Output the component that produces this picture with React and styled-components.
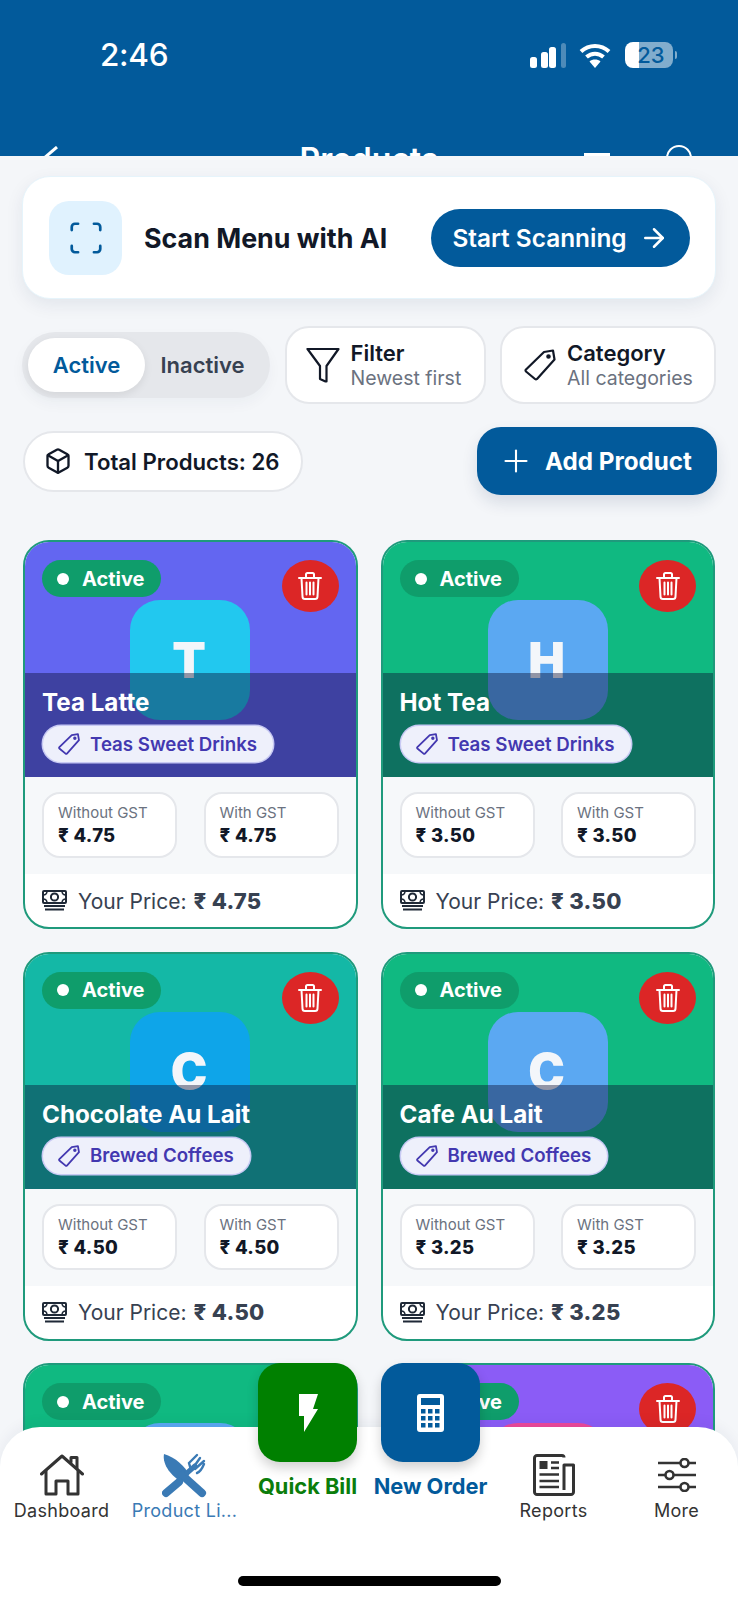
import React from "react";
import styled, { createGlobalStyle } from "styled-components";
import { Box, Plus, ArrowRight, Scan } from "lucide-react";

const Global = createGlobalStyle`
  html, body { margin: 0; padding: 0; background: #f4f6f9; }
  * { box-sizing: border-box; }
  body { font-family: Inter, "Liberation Sans", sans-serif; }
`;
const BLUE = "#025a9b";

const Page = styled.div`position: relative; width: 738px; height: 1600px; overflow: hidden; background: #f4f6f9;`;
const Header = styled.header`position: relative; height: 156px; background: ${BLUE}; overflow: hidden; color: #fff;`;
const StatusBar = styled.div`display: flex; align-items: center; height: 26px; margin-top: 42px; padding: 0 65px 0 100px; position: absolute; top: 0; left: 0; right: 0;`;
const Time = styled.span`font-size: 31.5px; font-weight: 500; letter-spacing: -0.3px; line-height: 26px;`;
const StatusIcons = styled.div`display: flex; align-items: center; margin-left: auto;`;
const Battery = styled.div`width: 48px; height: 26px; border-radius: 8px; margin-left: 14px; background: linear-gradient(90deg, #fff 0 14px, rgba(255,255,255,.5) 14px); color: ${BLUE}; font-size: 22px; font-weight: 500; display: flex; align-items: center; justify-content: center; position: relative; padding-left: 4px;
  &::after { content: ""; position: absolute; right: -4px; top: 9px; width: 2px; height: 8px; border-radius: 0 2px 2px 0; background: rgba(255,255,255,.5); }`;
const NavBarClip = styled.div`position: absolute; top: 143px; left: 0; right: 0; height: 40px;`;
const Title = styled.div`position: absolute; left: 0; right: 0; text-align: center; top: -2px; font-size: 32px; font-weight: 600; line-height: 38px;`;
const BackIcon = styled.span`position: absolute; left: 42px; top: 3px; display: block; line-height: 0;`;
const MenuBars = styled.span`position: absolute; left: 584px; top: 10px; width: 26px; height: 3px; background: #fff; display: block;`;
const SearchIcon = styled.span`position: absolute; left: 666px; top: 2px; width: 26px; height: 26px; border-radius: 50%; border: 2.5px solid #fff; display: block;`;

const Main = styled.main`padding: 20px 23px 0;`;
const ScanCard = styled.section`display: flex; align-items: center; height: 123px; padding: 0 25px 0 26px; border-radius: 28px; background: #fff; border: 1px solid #e6f4fb; box-shadow: 0 6px 18px rgba(15,40,80,.08); margin: 0 -1px 27px;`;
const ScanIcon = styled.div`width: 73px; height: 74px; border-radius: 20px; background: #e0f2fe; display: flex; align-items: center; justify-content: center; color: ${BLUE};`;
const ScanTitle = styled.h2`margin: 0 0 0 22px; font-size: 26.8px; font-weight: 700; color: #111827;`;
const ScanBtn = styled.button`margin-left: auto; width: 259px; height: 58px; border-radius: 29px; border: 0; background: ${BLUE}; color: #fff; font: 600 24.4px Inter, sans-serif; display: flex; align-items: center; justify-content: center; gap: 12px;`;

const Controls = styled.div`display: flex; align-items: center; justify-content: space-between; height: 78px; margin: 0 -1px 23px;`;
const Segmented = styled.div`width: 248px; height: 66px; border-radius: 33px; background: #e5e7eb; display: flex; align-items: center; padding: 0 6px; box-shadow: 0 6px 14px rgba(15,40,80,.04);`;
const Seg = styled.span`height: 54px; display: flex; align-items: center; justify-content: center; width: ${p => p.$on ? 117 : 115}px; border-radius: 27px; font-size: 22px; font-weight: 600; color: ${p => p.$on ? BLUE : "#374151"}; background: ${p => p.$on ? "#fff" : "transparent"}; box-shadow: ${p => p.$on ? "0 3px 8px rgba(0,0,0,.08)" : "none"};`;
const FilterBox = styled.div`width: ${p => p.$w}px; height: 78px; border-radius: 24px; background: #fff; border: 2px solid #e5e7eb; display: flex; align-items: center; gap: ${p => p.$gap}px; padding-left: ${p => p.$pad}px; color: #111827;`;
const FilterText = styled.div`display: flex; flex-direction: column;`;
const FilterName = styled.span`font-size: 22px; font-weight: 600; color: #111827; line-height: 26px;`;
const FilterSub = styled.span`font-size: 19.5px; color: #6b7280; line-height: 24px;`;

const TotalsRow = styled.div`display: flex; align-items: center; justify-content: space-between; height: 68px; margin-bottom: 45px;`;
const Total = styled.div`width: 280px; height: 61px; border-radius: 31px; background: #fff; border: 2px solid #e5e7eb; display: flex; align-items: center; gap: 12px; padding-left: 19px; font-size: 22.2px; font-weight: 600; color: #111827;`;
const AddBtn = styled.button`width: 240px; height: 68px; margin-right: -2px; border-radius: 24px; border: 0; background: ${BLUE}; color: #fff; font: 700 24.2px Inter, sans-serif; display: flex; align-items: center; gap: 11px; padding-left: 21px; box-shadow: 0 8px 16px rgba(15,40,80,.12);`;

const Grid = styled.div`display: grid; grid-template-columns: 334.5px 334.5px; gap: 22.5px 23px;`;
const Card = styled.article`height: 389px; border-radius: 26px; border: 2px solid #1f9a7c; overflow: hidden; background: #fff; display: flex; flex-direction: column;`;
const Head = styled.div`position: relative; height: 235px; background: ${p => p.$bg}; flex: none;`;
const HeadTop = styled.div`height: 131px; padding: 18px 17px 0 17px; display: flex; justify-content: space-between; align-items: flex-start;`;
const Badge = styled.span`position: relative; z-index: 2; width: 119px; height: 37px; border-radius: 19px; background: #0f9d6b; color: #fff; font-size: 20px; font-weight: 700; display: flex; align-items: center; gap: 13px; padding-left: 15px;`;
const Dot = styled.i`width: 12px; height: 12px; border-radius: 50%; background: #fff;`;
const Delete = styled.span`position: relative; z-index: 2; width: 57px; height: 52px; border-radius: 50%; background: #dc2626; color: #fff; display: flex; align-items: center; justify-content: center;`;
const Tile = styled.div`position: absolute; left: 105px; top: 58px; width: 120px; height: 120px; border-radius: 30px; background: ${p => p.$bg}; color: #f3f6fa; font-size: 49px; font-weight: 900; display: flex; align-items: center; justify-content: center; padding-right: 2px;`;
const Band = styled.div`position: relative; height: 104px; background: rgba(12,15,50,.42); padding: 12px 17px 0; color: #fff;`;
const Name = styled.div`font-size: 24.2px; font-weight: 700; line-height: 36px; position: relative;`;
const Chip = styled.span`display: inline-flex; align-items: center; gap: 10px; height: 36px; margin: 5px 0 0 1px; padding: 0 16px 0 15px; border-radius: 18px; background: #eef0fb; box-shadow: 0 0 0 1.5px #c7c9f3; color: #4338b0; font-size: 18.7px; font-weight: 600; position: relative;`;
const Prices = styled.div`height: 97px; background: #f6f8fa; padding: 15px 17px 0 17px; display: flex; justify-content: space-between; flex: none;`;
const PriceBox = styled.div`width: 135px; height: 66px; border-radius: 18px; background: #fff; border: 2px solid #e5e7eb; padding: 9px 0 0 14px;`;
const PriceLabel = styled.div`font-size: 15px; color: #6b7280; line-height: 20px;`;
const PriceVal = styled.div`font-size: 18.5px; font-weight: 800; color: #111827; line-height: 25px; letter-spacing: .3px;`;
const Foot = styled.div`flex: 1; display: flex; align-items: center; padding: 0 0 0 17px; gap: 11px; font-size: 21px; color: #374151;`;
const FootPrice = styled.b`font-size: 22px; font-weight: 800; margin-left: 7px; letter-spacing: .3px;`;

const Nav = styled.nav`position: absolute; z-index: 5; left: 0; right: 0; bottom: 0; height: 173px; background: #fff; border-radius: 40px 40px 0 0; box-shadow: 0 -4px 14px rgba(15,40,80,.05); display: grid; grid-template-columns: repeat(6, 123px);`;
const NavItem = styled.div`display: flex; flex-direction: column; align-items: center; padding-top: 25px; font-size: 18px; color: ${p => p.$on ? "#3a7ab5" : "#333"}; white-space: nowrap; letter-spacing: .3px;`;
const NavIcon = styled.div`height: 46px; display: flex; align-items: center; justify-content: center;`;
const NavLabel = styled.span`line-height: 22px; margin-top: 2px;`;
const Float = styled.div`display: flex; flex-direction: column; align-items: center; margin-top: -64px; color: ${p => p.$c}; white-space: nowrap;`;
const FloatBtn = styled.div`width: 99px; height: 99px; border-radius: 22px; background: ${p => p.$bg}; display: flex; align-items: center; justify-content: center; box-shadow: 0 6px 12px rgba(0,0,0,.18);`;
const FloatLabel = styled.span`font-size: 21.8px; font-weight: 700; line-height: 26px; margin-top: 11px;`;
const HomeBar = styled.div`position: absolute; left: 238px; top: 149px; width: 263px; height: 10px; border-radius: 5px; background: #000;`;

const Signal = () => (
  <svg width="36" height="25" viewBox="0 0 36 25" fill="#fff">
    <rect x="0" y="14" width="7" height="11" rx="2.5" /><rect x="11" y="9" width="7" height="16" rx="2.5" />
    <rect x="19" y="4" width="7" height="21" rx="2.5" /><rect x="31" y="0" width="5" height="25" rx="2.5" opacity=".3" />
  </svg>
);
const Wifi = () => (
  <svg width="32" height="25" viewBox="0 0 32 25" fill="none" stroke="#fff" strokeWidth="4" style={{ marginLeft: 13 }}>
    <path d="M2 8.5C10 1 22 1 30 8.5" /><path d="M7.5 14C12.5 9.5 19.5 9.5 24.5 14" />
    <path d="M16 25l-5.5-6.5c3-2.6 8-2.6 11 0z" fill="#fff" stroke="none" />
  </svg>
);
const Back = () => (
  <svg width="18" height="14" viewBox="0 0 18 14" fill="none" stroke="#fff" strokeWidth="3"><path d="M15 1L1 13" /></svg>
);
const FunnelIcon = () => (
  <svg width="34" height="38" viewBox="0 0 34 38" fill="none" stroke="#111827" strokeWidth="2.2" strokeLinejoin="round">
    <path d="M1.5 3h31L20.5 20v15.5h-1l-5.5-2.5V20z" />
  </svg>
);
const TagIcon = ({ size = 32, sw = 2.2, color = "#111827" }) => (
  <svg width={size} height={size} viewBox="0 0 32 32" fill="none" stroke={color} strokeWidth={sw} strokeLinejoin="round">
    <path d="M20 3l9-1.5 1.5 9L13 30a1.5 1.5 0 0 1-2 0L2 22.5a1.5 1.5 0 0 1 0-2z" />
    <circle cx="24.5" cy="7.5" r="1.2" fill={color} />
  </svg>
);
const TrashIcon = () => (
  <svg width="24" height="28" viewBox="0 0 24 28" fill="none" stroke="#fff" strokeWidth="2" strokeLinecap="round" strokeLinejoin="round">
    <path d="M1 6h22M8 6V2.5A1.5 1.5 0 0 1 9.5 1h5A1.5 1.5 0 0 1 16 2.5V6" />
    <path d="M3.5 6l1 18.5A2.5 2.5 0 0 0 7 27h10a2.5 2.5 0 0 0 2.5-2.5l1-18.5" />
    <path d="M8.5 10.5v12M12 10.5v12M15.5 10.5v12" />
  </svg>
);
const Money = () => (
  <svg width="25" height="21" viewBox="0 0 25 21" fill="none" stroke="#1f2937" strokeWidth="2">
    <rect x="1" y="1" width="23" height="12" rx="1" /><circle cx="12.5" cy="7" r="3.6" />
    <path d="M1 5c3 0 4-2 4-4M24 5c-3 0-4-2-4-4M1 9c3 0 4 2 4 4M24 9c-3 0-4 2-4 4" strokeWidth="1.5" />
    <path d="M2 16h21M3 19.5h19" />
  </svg>
);
const HomeIcon = () => (
  <svg width="44" height="42" viewBox="0 0 44 42" fill="none" stroke="#333" strokeWidth="3" strokeLinejoin="round" strokeLinecap="round">
    <path d="M1.5 20L22 2l20.5 18" /><path d="M6 17v23h10V27h12v13h10V17" /><path d="M31 8V3.5h6V14" />
  </svg>
);
const ForkKnife = () => (
  <svg width="45" height="45" viewBox="0 0 45 45" fill="#3a7ab5">
    <path d="M2 1C13 4 24 14 27 22L20 29C10 24 0 12 2 1Z" />
    <path d="M20 22L40 40" stroke="#3a7ab5" strokeWidth="8" strokeLinecap="round" />
    <path d="M4 40L17 29" stroke="#3a7ab5" strokeWidth="8" strokeLinecap="round" />
    <path d="M25 20L33 13" stroke="#3a7ab5" strokeWidth="5" strokeLinecap="round" />
    <path d="M29 17L27 10l8-8M31 15L38 5M33 16l9-8M35 20c3-1 5-4 7-9" stroke="#3a7ab5" strokeWidth="2.4" strokeLinecap="round" fill="none" />
  </svg>
);
const News = () => (
  <svg width="42" height="42" viewBox="0 0 42 42" fill="none" stroke="#333" strokeWidth="3" strokeLinejoin="round">
    <path d="M31 3.5a2 2 0 0 0-2-2H4a2.5 2.5 0 0 0-2.5 2.5v34A2.5 2.5 0 0 0 4 40.5h34a2.5 2.5 0 0 0 2.5-2.5V11H31v25" />
    <rect x="6.5" y="7" width="8" height="8" fill="#333" stroke="none" />
    <path d="M18 8.5h8M18 14h8M6.5 20.5h19.5M6.5 27h19.5M6.5 33h19.5" strokeWidth="2.6" />
  </svg>
);
const Sliders = () => (
  <svg width="38" height="34" viewBox="0 0 38 34" fill="none" stroke="#333" strokeWidth="2.6">
    <path d="M0 5h22M31 5h7M0 17h7M16 17h22M0 29h22M31 29h7" />
    <circle cx="26.5" cy="5" r="4" /><circle cx="11.5" cy="17" r="4" /><circle cx="26.5" cy="29" r="4" />
  </svg>
);
const Bolt = () => (
  <svg width="20" height="38" viewBox="0 0 20 38"><path d="M1 0h19l-5 15h5L6 38V22H1z" fill="#fff" /></svg>
);
const Calc = () => (
  <svg width="27" height="38" viewBox="0 0 27 38">
    <rect width="27" height="38" rx="3" fill="#fff" /><rect x="4" y="4" width="19" height="7" fill={BLUE} />
    {[15, 22, 29].flatMap(y => [4, 11, 18].map(x => <rect key={x + "-" + y} x={x} y={y} width="4.5" height="4.5" fill={BLUE} />))}
  </svg>
);

const products = [
  { n: "Tea Latte", c: "Teas Sweet Drinks", p: "4.75", l: "T", bg: "#6366f1", t: "#22c8ef" },
  { n: "Hot Tea", c: "Teas Sweet Drinks", p: "3.50", l: "H", bg: "#10b981", t: "#5ba8f2" },
  { n: "Chocolate Au Lait", c: "Brewed Coffees", p: "4.50", l: "C", bg: "#14b8a6", t: "#0ea5e9" },
  { n: "Cafe Au Lait", c: "Brewed Coffees", p: "3.25", l: "C", bg: "#10b981", t: "#5ba8f2" },
  { n: "Espresso", c: "Brewed Coffees", p: "3.00", l: "E", bg: "#10b981", t: "#5ba8f2" },
  { n: "Mocha", c: "Brewed Coffees", p: "4.00", l: "M", bg: "#8b5cf6", t: "#ec4899" },
];

export default function App() {
  return (
    <Page>
      <Global />
      <Header>
        <StatusBar>
          <Time>2:46</Time>
          <StatusIcons><Signal /><Wifi /><Battery>23</Battery></StatusIcons>
        </StatusBar>
        <NavBarClip>
          <BackIcon><Back /></BackIcon>
          <Title>Products</Title>
          <MenuBars />
          <SearchIcon />
        </NavBarClip>
      </Header>
      <Main>
        <ScanCard>
          <ScanIcon><Scan size={38} strokeWidth={1.7} /></ScanIcon>
          <ScanTitle>Scan Menu with AI</ScanTitle>
          <ScanBtn>Start Scanning <ArrowRight size={30} strokeWidth={2} /></ScanBtn>
        </ScanCard>
        <Controls>
          <Segmented><Seg $on>Active</Seg><Seg>Inactive</Seg></Segmented>
          <FilterBox $w={201} $gap={11} $pad={19}><FunnelIcon /><FilterText><FilterName>Filter</FilterName><FilterSub>Newest first</FilterSub></FilterText></FilterBox>
          <FilterBox $w={216} $gap={11} $pad={22}><TagIcon /><FilterText><FilterName>Category</FilterName><FilterSub>All categories</FilterSub></FilterText></FilterBox>
        </Controls>
        <TotalsRow>
          <Total><Box size={28} strokeWidth={2} />Total Products: 26</Total>
          <AddBtn><Plus size={36} strokeWidth={1.4} />Add Product</AddBtn>
        </TotalsRow>
        <Grid>
          {products.map((x, i) => (
            <Card key={i}>
              <Head $bg={x.bg}>
                <Tile $bg={x.t}>{x.l}</Tile>
                <HeadTop>
                  <Badge><Dot />Active</Badge>
                  <Delete><TrashIcon /></Delete>
                </HeadTop>
                <Band>
                  <Name>{x.n}</Name>
                  <Chip><TagIcon size={22} sw={2.6} color="#4338b0" />{x.c}</Chip>
                </Band>
              </Head>
              <Prices>
                <PriceBox><PriceLabel>Without GST</PriceLabel><PriceVal>₹ {x.p}</PriceVal></PriceBox>
                <PriceBox><PriceLabel>With GST</PriceLabel><PriceVal>₹ {x.p}</PriceVal></PriceBox>
              </Prices>
              <Foot><Money /><span>Your Price:<FootPrice>₹ {x.p}</FootPrice></span></Foot>
            </Card>
          ))}
        </Grid>
      </Main>
      <Nav>
        <NavItem><NavIcon><HomeIcon /></NavIcon><NavLabel>Dashboard</NavLabel></NavItem>
        <NavItem $on><NavIcon><ForkKnife /></NavIcon><NavLabel>Product Li...</NavLabel></NavItem>
        <Float $c="#0b7d0b"><FloatBtn $bg="#008000"><Bolt /></FloatBtn><FloatLabel>Quick Bill</FloatLabel></Float>
        <Float $c={BLUE}><FloatBtn $bg={BLUE}><Calc /></FloatBtn><FloatLabel>New Order</FloatLabel></Float>
        <NavItem><NavIcon><News /></NavIcon><NavLabel>Reports</NavLabel></NavItem>
        <NavItem><NavIcon><Sliders /></NavIcon><NavLabel>More</NavLabel></NavItem>
        <HomeBar />
      </Nav>
    </Page>
  );
}
